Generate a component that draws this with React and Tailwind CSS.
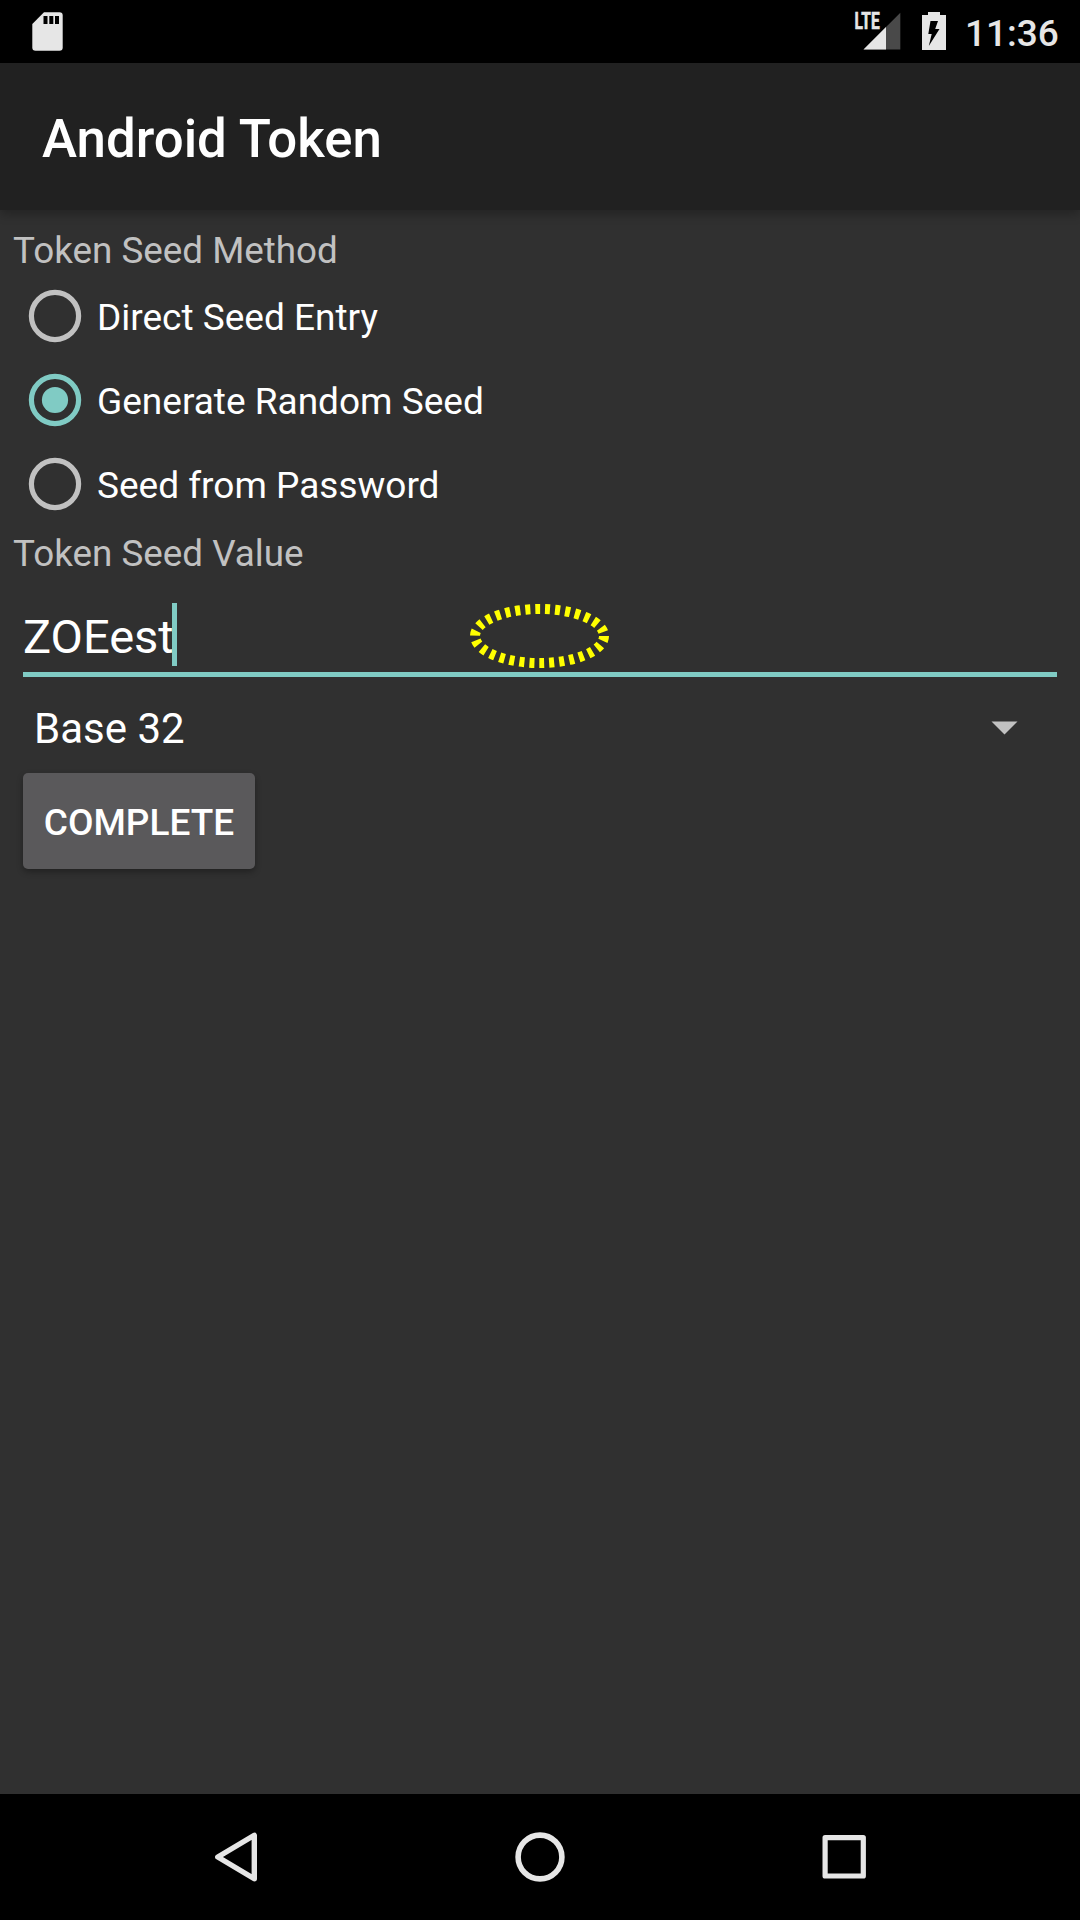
const methods = [
  { label: "Direct Seed Entry", selected: false },
  { label: "Generate Random Seed", selected: true },
  { label: "Seed from Password", selected: false },
];

function StatusBar() {
  return (
    <div className="flex h-[63px] shrink-0 items-start bg-black text-[#e6e6e6]">
      <svg className="ml-[32px] mt-[12px] h-[39px] w-[31px]" viewBox="0 0 31 39" fill="#e6e6e6">
        <path d="M12 0.3H27.5Q30.7 0.3 30.7 3.5V35.5Q30.7 38.7 27.5 38.7H3.5Q0.3 38.7 0.3 35.5V12Z" />
        <path d="M11.5 4h4v8h-4zM17.3 4h4v8h-4zM23 4h4v8h-4z" fill="#000" />
      </svg>
      <svg className="ml-auto mt-[2px] h-[50px] w-[50px]" viewBox="-4 -10 50 50">
        <path d="M45.3 0.7V37.5H8.5Z" fill="#494949" />
        <path d="M31 15V37.5H8.5Z" fill="#e6e6e6" />
        <path d="M0 0h25.5v19.5H0z" fill="#000" />
        <text x="-0.4" y="17.4" textLength="25" lengthAdjust="spacingAndGlyphs" fill="#e6e6e6" stroke="#e6e6e6" strokeWidth="0.6" fontSize="23" fontWeight="700">LTE</text>
      </svg>
      <svg className="ml-[21px] mt-[12px] h-[38px] w-[24px]" viewBox="0 0 24 38">
        <path d="M6 0h12v3h6v35H0V3h6z" fill="#e6e6e6" />
        <path d="M8.5 9H16L13.2 17H17.5L6.8 34L9.7 22H6.3Z" fill="#000" />
      </svg>
      <span className="ml-[19px] mr-[21px] w-[94px] whitespace-nowrap text-[37px] font-medium leading-[67px]">11:36</span>
    </div>
  );
}

function Radio({ selected }) {
  const color = selected ? "#80cbc4" : "#c1c1c1";
  return (
    <svg className="h-[54px] w-[54px]" viewBox="0 0 54 54">
      <circle cx="27" cy="27" r="23.6" fill="none" stroke={color} strokeWidth="5.2" />
      {selected && <circle cx="27" cy="27" r="13.1" fill={color} />}
    </svg>
  );
}

function NavBar() {
  return (
    <div className="flex h-[126px] shrink-0 items-start justify-between bg-black px-[200px] pt-[26px]">
      <svg className="h-[70px] w-[70px]" viewBox="0 0 70 70" fill="none" stroke="#e6e6e6" strokeWidth="5.4" strokeLinejoin="round">
        <path d="M54.3 15.3V58.8L17.8 37Z" />
      </svg>
      <svg className="h-[70px] w-[70px]" viewBox="0 0 70 70" fill="none" stroke="#e6e6e6" strokeWidth="5.6">
        <circle cx="35" cy="37" r="21.9" />
      </svg>
      <svg className="h-[70px] w-[70px]" viewBox="0 0 70 70" fill="none" stroke="#e6e6e6" strokeWidth="5.2" strokeLinejoin="round">
        <rect x="15.1" y="17.6" width="38.2" height="38.4" />
      </svg>
    </div>
  );
}

export default function App() {
  return (
    <div className="flex h-[1920px] w-[1080px] flex-col overflow-hidden bg-[#303030] font-['Roboto',sans-serif] text-white">
      <StatusBar />
      <header className="z-10 flex h-[147px] shrink-0 items-center bg-[#212121] pl-[42px] shadow-[0_4px_10px_rgba(0,0,0,0.28)]">
        <h1 className="pt-[4px] text-[52.8px] font-medium leading-[62px]">Android Token</h1>
      </header>
      <main className="flex grow flex-col">
        <p className="mt-[16px] h-[48px] pl-[13px] text-[36.8px] leading-[49px] text-[#c1c1c1]">Token Seed Method</p>
        <div className="flex flex-col">
          {methods.map((m) => (
            <label key={m.label} className="flex h-[84px] items-center pl-[28px]">
              <Radio selected={m.selected} />
              <span className="ml-[15px] pt-[2px] text-[37px] leading-[43px]">{m.label}</span>
            </label>
          ))}
        </div>
        <p className="mt-[3px] h-[49px] pl-[13px] text-[36.8px] leading-[49px] text-[#c1c1c1]">Token Seed Value</p>
        <div className="relative mx-[23px] mt-[25px] flex h-[74px] items-start border-b-[5px] border-[#80cbc4]">
          <span className="w-[149px] whitespace-nowrap text-[47px] leading-[67px]">ZOEest</span>
          <span className="h-[63px] w-[5px] bg-[#80cbc4]" />
          <svg className="absolute left-[447px] top-px h-[64px] w-[140px]" viewBox="0 0 140 64" fill="none">
            <ellipse cx="69.5" cy="32" rx="64.5" ry="27" stroke="#ffff00" strokeWidth="10" strokeDasharray="5 5" />
          </svg>
        </div>
        <div className="flex h-[96px] items-center pl-[34px] pr-[62px]">
          <span className="pt-[7px] text-[42px] leading-[50px]">Base 32</span>
          <svg className="ml-auto mt-[5px] h-[14px] w-[27px]" viewBox="0 0 27 14">
            <path d="M0.5 0.5H26.5L13.5 13.5Z" fill="#c1c1c1" />
          </svg>
        </div>
        <button className="ml-[23px] flex h-[96px] w-[232px] items-center justify-center rounded-[5px] bg-[#5a595b] pt-[2px] text-[37px] font-medium leading-[43px] shadow-[0_3px_6px_rgba(0,0,0,0.3)]">
          COMPLETE
        </button>
      </main>
      <NavBar />
    </div>
  );
}
